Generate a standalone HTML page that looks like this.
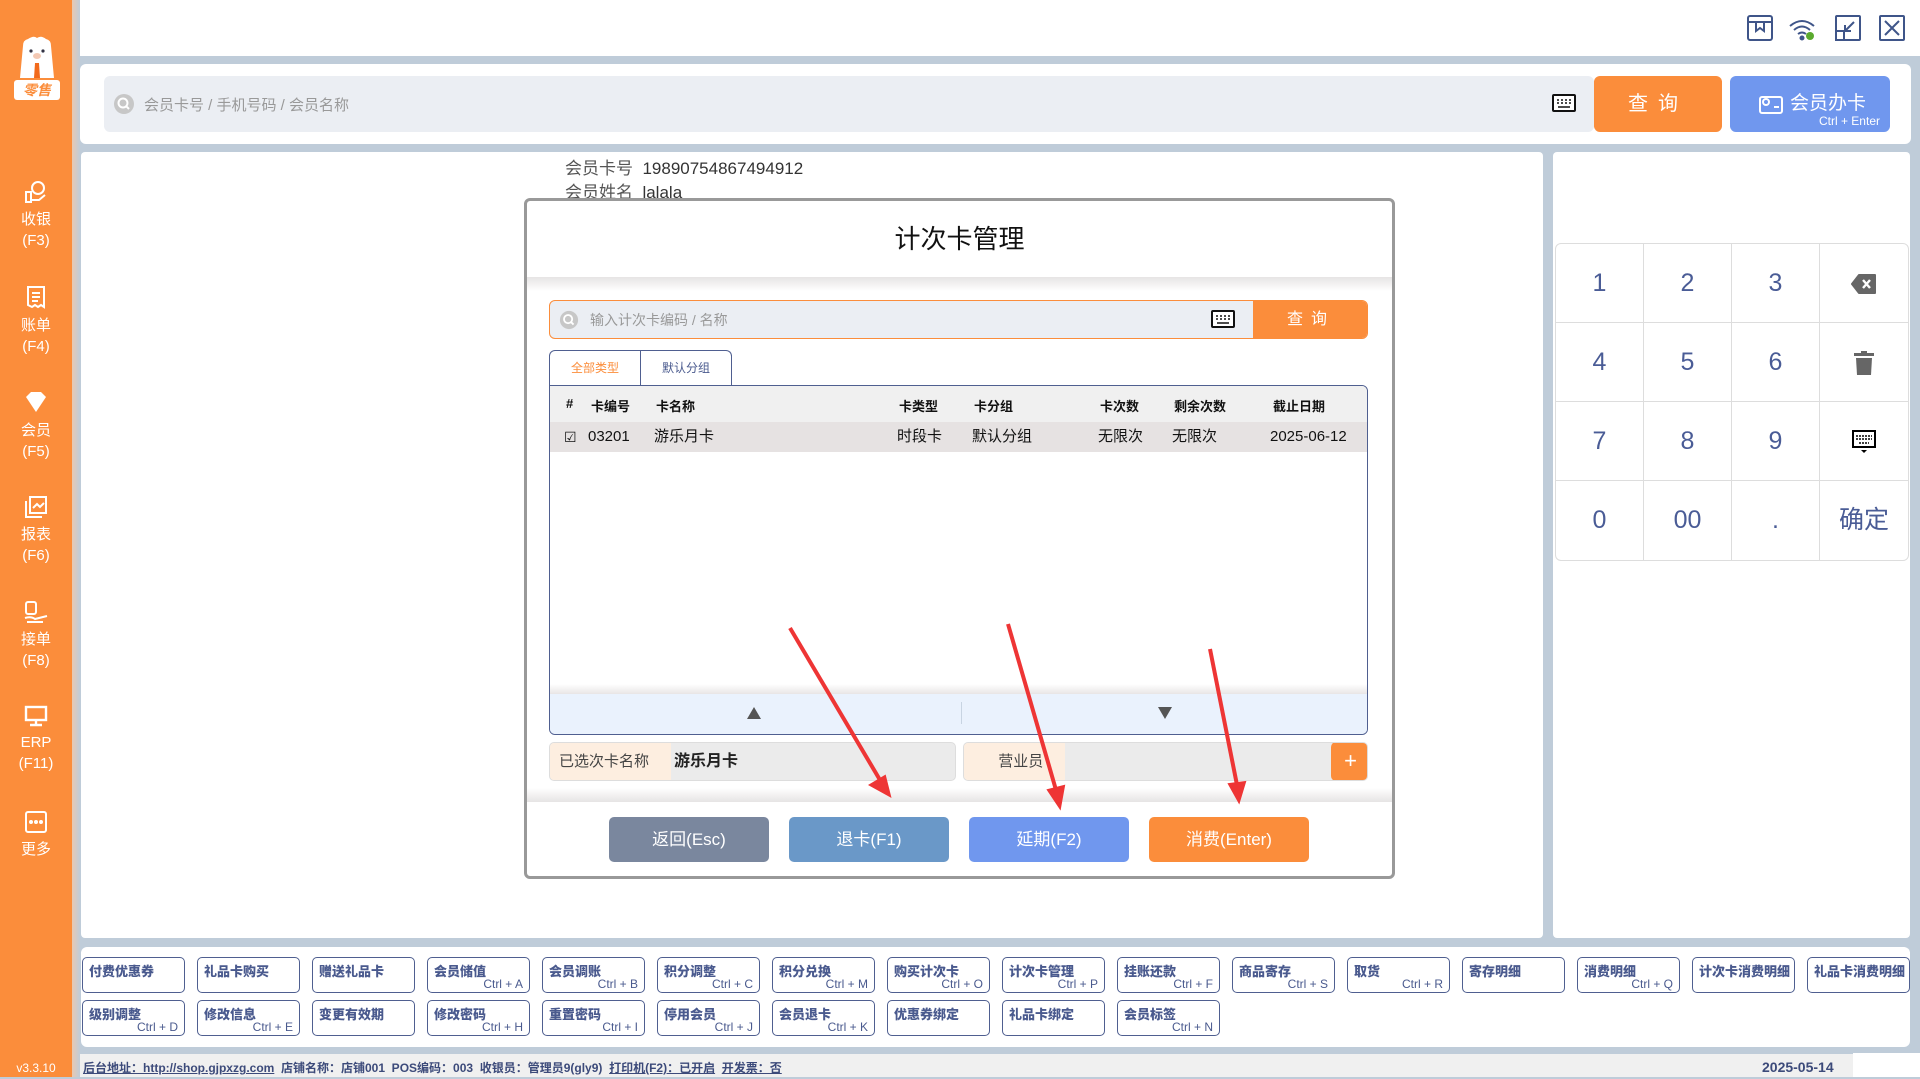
<!DOCTYPE html>
<html><head><meta charset="utf-8"><style>
*{margin:0;padding:0;box-sizing:border-box}
body{width:1920px;height:1077px;position:relative;overflow:hidden;background:#BFCCD9;font-family:"Liberation Sans","Noto Sans CJK SC",sans-serif}
.a{position:absolute}
.side{left:0;top:0;width:72px;height:1077px;background:#FB8D3B}
.shadow{left:72px;top:0;width:8px;height:1077px;background:linear-gradient(to right,#e9c8b0,#BFCCD9)}
.si{position:absolute;left:0;width:72px;text-align:center;color:#fff;font-size:15px;line-height:21px}
.bt{position:absolute;width:103px;height:36px;border:1.5px solid #4F5F90;border-radius:5px;background:#fff;color:#4A5A8E;font-size:13px;font-weight:bold}
.bt b{position:absolute;left:6px;top:3px}
.bt i{position:absolute;right:6px;bottom:1px;font-style:normal;font-weight:normal;font-size:12px}
.kp{position:absolute;width:88px;height:79px;border-right:1px solid #ddd;border-bottom:1px solid #ddd;text-align:center;line-height:79px;color:#4A5C96;font-size:25px}
.mb{position:absolute;top:817px;width:160px;height:45px;border-radius:5px;color:#fff;font-size:17px;text-align:center;line-height:45px}
</style></head><body>
<div class="a" style="left:0;top:0;width:1920px;height:56px;background:#fff"></div>
<div class="a side"></div>
<div class="a shadow"></div>
<svg class="a" style="left:14px;top:34px" width="46" height="68" viewBox="0 0 46 68">
<path d="M6 44 L9 12 Q9 6 14 5 Q20 1 23 4 Q27 1 32 5 Q37 6 37 12 L40 44 Z" fill="#fff"/>
<circle cx="17" cy="17" r="1.6" fill="#334"/><circle cx="29" cy="17" r="1.6" fill="#334"/>
<ellipse cx="23" cy="22" rx="4" ry="3" fill="#f4c9b4"/>
<path d="M21 29 L25 29 L26 44 L20 44 Z" fill="#F26A1B"/>
<rect x="0" y="46" width="46" height="20" rx="3" fill="#fff"/>
<text x="23" y="61" text-anchor="middle" font-size="14" font-weight="bold" font-style="italic" fill="#FB8D3B" font-family="Noto Sans CJK SC">零售</text>
</svg>
<svg class="a" style="left:24px;top:180px" width="24" height="24" viewBox="0 0 24 24" fill="none" stroke="#fff" stroke-width="2"><circle cx="14" cy="8" r="6"/><path d="M2 12h5v10H2zM7 20l8 0 6-5"/></svg>
<div class="si" style="top:209px">收银<br>(F3)</div>
<svg class="a" style="left:25px;top:285px" width="22" height="24" viewBox="0 0 22 24" fill="none" stroke="#fff" stroke-width="2"><path d="M3 2h16v20l-3-2-3 2-3-2-3 2-4-2z"/><path d="M7 8h8M7 12h8M7 16h6"/></svg>
<div class="si" style="top:315px">账单<br>(F4)</div>
<svg class="a" style="left:24px;top:391px" width="24" height="22" viewBox="0 0 24 22"><path d="M2 6 L7 1 H17 L22 6 L12 21 Z" fill="#fff"/></svg>
<div class="si" style="top:420px">会员<br>(F5)</div>
<svg class="a" style="left:24px;top:495px" width="24" height="24" viewBox="0 0 24 24" fill="none" stroke="#fff" stroke-width="2"><rect x="6" y="2" width="16" height="16"/><path d="M2 6v16h16M9 13l4-4 3 3 4-4"/></svg>
<div class="si" style="top:524px">报表<br>(F6)</div>
<svg class="a" style="left:23px;top:600px" width="26" height="24" viewBox="0 0 26 24" fill="none" stroke="#fff" stroke-width="2"><rect x="3" y="2" width="10" height="12" rx="2"/><path d="M2 18 Q8 16 12 19 L24 16 M4 22 H20"/></svg>
<div class="si" style="top:629px">接单<br>(F8)</div>
<svg class="a" style="left:24px;top:705px" width="24" height="22" viewBox="0 0 24 22" fill="none" stroke="#fff" stroke-width="2.4"><rect x="2" y="2" width="20" height="13"/><path d="M12 15v4M6 20h12"/></svg>
<div class="si" style="top:732px">ERP<br>(F11)</div>
<svg class="a" style="left:24px;top:810px" width="24" height="24" viewBox="0 0 24 24" fill="none" stroke="#fff" stroke-width="2"><rect x="2" y="2" width="20" height="20" rx="2"/><circle cx="7" cy="12" r="1" fill="#fff"/><circle cx="12" cy="12" r="1" fill="#fff"/><circle cx="17" cy="12" r="1" fill="#fff"/></svg>
<div class="si" style="top:839px">更多</div>
<div class="si" style="top:1058px;font-size:12px">v3.3.10</div>
<svg class="a" style="left:1746px;top:14px" width="162" height="28" viewBox="0 0 162 28" fill="none" stroke="#3F5589" stroke-width="2">
<rect x="2" y="2" width="24" height="24" rx="2"/><path d="M2 8h24M10 8v9l4-3 4 3V8"/>
<path d="M44 12 Q56 2 68 12M48 16 Q56 9 64 16M52 20 Q56 17 60 20"/><circle cx="56" cy="24" r="1.5" fill="#3F5589"/><circle cx="64" cy="22" r="4" fill="#5BAA2E" stroke="none"/>
<rect x="90" y="2" width="24" height="24" rx="1"/><rect x="90" y="17" width="8" height="9" fill="#fff"/><path d="M108 8 L99 17M99 11v6h6"/>
<rect x="134" y="2" width="24" height="24" rx="1"/><path d="M139 7l14 14M153 7l-14 14"/>
</svg>
<div class="a" style="left:80px;top:64px;width:1831px;height:80px;background:#fff;border-radius:6px"></div>
<div class="a" style="left:104px;top:76px;width:1490px;height:56px;background:#EBEEF3;border-radius:6px"></div>
<svg class="a" style="left:113px;top:93px" width="22" height="22" viewBox="0 0 22 22"><circle cx="11" cy="11" r="10" fill="#C7C7C7"/><circle cx="10" cy="10" r="4.5" fill="none" stroke="#fff" stroke-width="2"/><path d="M13 13l3 3" stroke="#fff" stroke-width="2"/></svg>
<div class="a" style="left:144px;top:94px;font-size:15px;color:#999">会员卡号 / 手机号码 / 会员名称</div>
<svg class="a" style="left:1552px;top:94px" width="24" height="18" viewBox="0 0 24 18"><rect x="1" y="1" width="22" height="16" rx="1" fill="#fff" stroke="#111" stroke-width="2"/><path d="M5 6h2M9 6h2M13 6h2M17 6h2M5 9h2M9 9h2M13 9h2M17 9h2M6 13h12" stroke="#111" stroke-width="1.6"/></svg>
<div class="a" style="left:1594px;top:76px;width:128px;height:56px;background:#FB8D3B;border-radius:6px;color:#fff;font-size:20px;text-align:center;line-height:56px;letter-spacing:10px">查询</div>
<div class="a" style="left:1730px;top:76px;width:160px;height:56px;background:#7097EE;border-radius:6px;color:#fff">
<svg class="a" style="left:28px;top:17px" width="26" height="22" viewBox="0 0 26 22" fill="none" stroke="#fff" stroke-width="2"><rect x="2" y="4" width="22" height="16" rx="2"/><circle cx="8" cy="9" r="3"/><path d="M16 14h5"/></svg>
<div class="a" style="left:60px;top:12px;font-size:19px">会员办卡</div>
<div class="a" style="right:10px;top:38px;font-size:12px">Ctrl + Enter</div></div>
<div class="a" style="left:81px;top:152px;width:1462px;height:786px;background:#fff;border-radius:4px"></div>
<div class="a" style="left:1553px;top:152px;width:357px;height:786px;background:#fff;border-radius:4px"></div>
<div class="a" style="left:565px;top:157px;font-size:17px;color:#555;line-height:24px">会员卡号&nbsp;&nbsp;<span style="color:#333">19890754867494912</span><br>会员姓名&nbsp;&nbsp;<span style="color:#333">lalala</span></div>
<div class="a" style="left:1555px;top:243px;width:354px;height:318px;border:1px solid #ddd;border-radius:6px;overflow:hidden">
<div class="kp" style="left:0;top:0">1</div><div class="kp" style="left:88px;top:0">2</div><div class="kp" style="left:176px;top:0">3</div><div class="kp" style="left:264px;top:0;border-right:0"><svg width="26" height="20" viewBox="0 0 26 20" style="vertical-align:middle"><path d="M8 1h16v18H8L1 10z" fill="#666" stroke="#666" stroke-linejoin="round" stroke-width="2"/><path d="M12 6l7 8M19 6l-7 8" stroke="#fff" stroke-width="2.4"/></svg></div>
<div class="kp" style="left:0;top:79px">4</div><div class="kp" style="left:88px;top:79px">5</div><div class="kp" style="left:176px;top:79px">6</div><div class="kp" style="left:264px;top:79px;border-right:0"><svg width="20" height="24" viewBox="0 0 20 24" style="vertical-align:middle"><rect x="0" y="2" width="20" height="3" fill="#666"/><rect x="7" y="0" width="6" height="3" fill="#666"/><path d="M2 7h16l-1 17H3z" fill="#666"/></svg></div>
<div class="kp" style="left:0;top:158px">7</div><div class="kp" style="left:88px;top:158px">8</div><div class="kp" style="left:176px;top:158px">9</div><div class="kp" style="left:264px;top:158px;border-right:0"><svg width="24" height="24" viewBox="0 0 24 24" style="vertical-align:middle"><rect x="1" y="1" width="22" height="16" fill="#fff" stroke="#000" stroke-width="2"/><path d="M4 6h16M4 9h16M7 13h10" stroke="#000" stroke-width="1.6" stroke-dasharray="2 1"/><path d="M9 20h6l-3 3z" fill="#000"/></svg></div>
<div class="kp" style="left:0;top:237px;border-bottom:0">0</div><div class="kp" style="left:88px;top:237px;border-bottom:0">00</div><div class="kp" style="left:176px;top:237px;border-bottom:0">.</div><div class="kp" style="left:264px;top:237px;border:0">确定</div>
</div>
<div class="a" style="left:524px;top:198px;width:871px;height:681px;background:#fff;border:3px solid #999;border-radius:6px"></div>
<div class="a" style="left:527px;top:219px;width:865px;text-align:center;font-size:26px;color:#111">计次卡管理</div>
<div class="a" style="left:527px;top:277px;width:865px;height:14px;background:linear-gradient(#e6e4e4,#fff)"></div>
<div class="a" style="left:549px;top:300px;width:819px;height:39px;border:1.5px solid #FB8D3B;border-radius:6px;background:#EBEEF3;overflow:hidden">
<svg class="a" style="left:9px;top:9px" width="20" height="20" viewBox="0 0 22 22"><circle cx="11" cy="11" r="10" fill="#C7C7C7"/><circle cx="10" cy="10" r="4.5" fill="none" stroke="#fff" stroke-width="2"/><path d="M13 13l3 3" stroke="#fff" stroke-width="2"/></svg>
<div class="a" style="left:40px;top:9px;font-size:14px;color:#999">输入计次卡编码 / 名称</div>
<svg class="a" style="left:661px;top:9px" width="24" height="18" viewBox="0 0 24 18"><rect x="1" y="1" width="22" height="16" rx="1" fill="#fff" stroke="#111" stroke-width="2"/><path d="M5 6h2M9 6h2M13 6h2M17 6h2M5 9h2M9 9h2M13 9h2M17 9h2M6 13h12" stroke="#111" stroke-width="1.6"/></svg>
<div class="a" style="left:703px;top:0;width:116px;height:39px;background:#FB8D3B;color:#fff;font-size:16px;text-align:center;line-height:37px;letter-spacing:8px">查询</div></div>
<div class="a" style="left:549px;top:350px;width:183px;height:36px;border:1px solid #4F5F90;border-bottom:0;border-radius:6px 6px 0 0;font-size:12px">
<div class="a" style="left:0;top:0;width:91px;height:35px;border-right:1px solid #4F5F90;color:#FB8D3B;text-align:center;line-height:35px">全部类型</div>
<div class="a" style="left:91px;top:0;width:90px;height:35px;color:#4A5A8E;text-align:center;line-height:35px">默认分组</div></div>
<div class="a" style="left:549px;top:385px;width:819px;height:350px;border:1px solid #4F5F90;border-radius:0 6px 6px 6px;overflow:hidden">
<div class="a" style="left:0;top:0;width:819px;height:36px;background:#F0F0F0"></div>
<div class="a" style="left:0;top:36px;width:819px;height:30px;background:#E6E2E2"></div>
<div class="a" style="left:0;top:298px;width:819px;height:10px;background:linear-gradient(#fff,#e8e5e5)"></div>
<div class="a" style="left:0;top:308px;width:819px;height:42px;background:#EAF2FD"></div>
<div class="a" style="left:411px;top:316px;width:1px;height:22px;background:#c8d4e2"></div>
<svg class="a" style="left:196px;top:320px" width="16" height="14"><path d="M8 1L15 13H1z" fill="#555"/></svg>
<svg class="a" style="left:607px;top:320px" width="16" height="14"><path d="M1 1H15L8 13z" fill="#555"/></svg>
<div style="font-size:13px;font-weight:bold;color:#111">
<span class="a" style="left:16px;top:10px">#</span><span class="a" style="left:41px;top:10px">卡编号</span><span class="a" style="left:106px;top:10px">卡名称</span><span class="a" style="left:349px;top:10px">卡类型</span><span class="a" style="left:424px;top:10px">卡分组</span><span class="a" style="left:550px;top:10px">卡次数</span><span class="a" style="left:624px;top:10px">剩余次数</span><span class="a" style="left:723px;top:10px">截止日期</span></div>
<div style="font-size:15px;color:#111;line-height:20px">
<span class="a" style="left:14px;top:41px;font-size:14px">☑</span><span class="a" style="left:38px;top:41px">03201</span><span class="a" style="left:104px;top:41px">游乐月卡</span><span class="a" style="left:347px;top:41px">时段卡</span><span class="a" style="left:422px;top:41px">默认分组</span><span class="a" style="left:548px;top:41px">无限次</span><span class="a" style="left:622px;top:41px">无限次</span><span class="a" style="left:720px;top:41px">2025-06-12</span></div>
</div>
<div class="a" style="left:549px;top:742px;width:407px;height:39px;border:1px solid #ddd;border-radius:5px;background:#EBEBEB;overflow:hidden">
<div class="a" style="left:0;top:0;width:121px;height:39px;background:#FDEEE0;font-size:15px;color:#444;line-height:37px;padding-left:9px">已选次卡名称</div>
<div class="a" style="left:124px;top:0;font-size:16px;font-weight:bold;color:#222;line-height:37px">游乐月卡</div></div>
<div class="a" style="left:963px;top:742px;width:405px;height:39px;border:1px solid #ddd;border-radius:5px;background:#EBEBEB;overflow:hidden">
<div class="a" style="left:0;top:0;width:101px;height:39px;background:#FDEEE0;font-size:15px;color:#444;line-height:37px;text-align:center">&nbsp;&nbsp;&nbsp;营业员</div>
<div class="a" style="left:367px;top:-1px;width:39px;height:39px;background:#FB8D3B;border-radius:5px;color:#fff;font-size:22px;text-align:center;line-height:37px">+</div></div>
<div class="a" style="left:527px;top:788px;width:865px;height:14px;background:linear-gradient(#fff,#e6e4e4)"></div>
<div class="mb" style="left:609px;background:#7A879E">返回(Esc)</div>
<div class="mb" style="left:789px;background:#6A98C8">退卡(F1)</div>
<div class="mb" style="left:969px;background:#7097EE">延期(F2)</div>
<div class="mb" style="left:1149px;background:#FB8D3B">消费(Enter)</div>
<svg class="a" style="left:0;top:0" width="1920" height="1077">
<g stroke="#EE3535" stroke-width="4" fill="#EE3535">
<line x1="790" y1="628" x2="880" y2="780"/><path d="M890 796 L870 785 L885 776 Z" stroke-width="2"/>
<line x1="1008" y1="624" x2="1056" y2="790"/><path d="M1060 808 L1048 790 L1064 786 Z" stroke-width="2"/>
<line x1="1210" y1="649" x2="1237" y2="785"/><path d="M1239 802 L1229 784 L1245 782 Z" stroke-width="2"/>
</g></svg>
<div class="a" style="left:81px;top:947px;width:1829px;height:100px;background:#fff;border-radius:6px"></div>
<div class="bt" style="left:82px;top:957px"><b>付费优惠券</b></div>
<div class="bt" style="left:197px;top:957px"><b>礼品卡购买</b></div>
<div class="bt" style="left:312px;top:957px"><b>赠送礼品卡</b></div>
<div class="bt" style="left:427px;top:957px"><b>会员储值</b><i>Ctrl + A</i></div>
<div class="bt" style="left:542px;top:957px"><b>会员调账</b><i>Ctrl + B</i></div>
<div class="bt" style="left:657px;top:957px"><b>积分调整</b><i>Ctrl + C</i></div>
<div class="bt" style="left:772px;top:957px"><b>积分兑换</b><i>Ctrl + M</i></div>
<div class="bt" style="left:887px;top:957px"><b>购买计次卡</b><i>Ctrl + O</i></div>
<div class="bt" style="left:1002px;top:957px"><b>计次卡管理</b><i>Ctrl + P</i></div>
<div class="bt" style="left:1117px;top:957px"><b>挂账还款</b><i>Ctrl + F</i></div>
<div class="bt" style="left:1232px;top:957px"><b>商品寄存</b><i>Ctrl + S</i></div>
<div class="bt" style="left:1347px;top:957px"><b>取货</b><i>Ctrl + R</i></div>
<div class="bt" style="left:1462px;top:957px"><b>寄存明细</b></div>
<div class="bt" style="left:1577px;top:957px"><b>消费明细</b><i>Ctrl + Q</i></div>
<div class="bt" style="left:1692px;top:957px"><b>计次卡消费明细</b></div>
<div class="bt" style="left:1807px;top:957px"><b>礼品卡消费明细</b></div>
<div class="bt" style="left:82px;top:1000px"><b>级别调整</b><i>Ctrl + D</i></div>
<div class="bt" style="left:197px;top:1000px"><b>修改信息</b><i>Ctrl + E</i></div>
<div class="bt" style="left:312px;top:1000px"><b>变更有效期</b></div>
<div class="bt" style="left:427px;top:1000px"><b>修改密码</b><i>Ctrl + H</i></div>
<div class="bt" style="left:542px;top:1000px"><b>重置密码</b><i>Ctrl + I</i></div>
<div class="bt" style="left:657px;top:1000px"><b>停用会员</b><i>Ctrl + J</i></div>
<div class="bt" style="left:772px;top:1000px"><b>会员退卡</b><i>Ctrl + K</i></div>
<div class="bt" style="left:887px;top:1000px"><b>优惠券绑定</b></div>
<div class="bt" style="left:1002px;top:1000px"><b>礼品卡绑定</b></div>
<div class="bt" style="left:1117px;top:1000px"><b>会员标签</b><i>Ctrl + N</i></div>
<div class="a" style="left:80px;top:1054px;width:1840px;height:23px;background:#F0F0F0"></div>
<div class="a" style="left:1853px;top:1053px;width:67px;height:24px;background:#fff"></div>
<div class="a" style="left:83px;top:1059px;font-size:12px;font-weight:bold;color:#3C4A7A;white-space:nowrap"><u>后台地址：http://shop.gjpxzg.com</u>&nbsp; 店铺名称：店铺001&nbsp; POS编码：003&nbsp; 收银员：管理员9(gly9)&nbsp; <u>打印机(F2)：已开启</u>&nbsp; <u>开发票：否</u></div>
<div class="a" style="left:1762px;top:1059px;font-size:14px;font-weight:bold;color:#3C4A7A">2025-05-14</div>
</body></html>
